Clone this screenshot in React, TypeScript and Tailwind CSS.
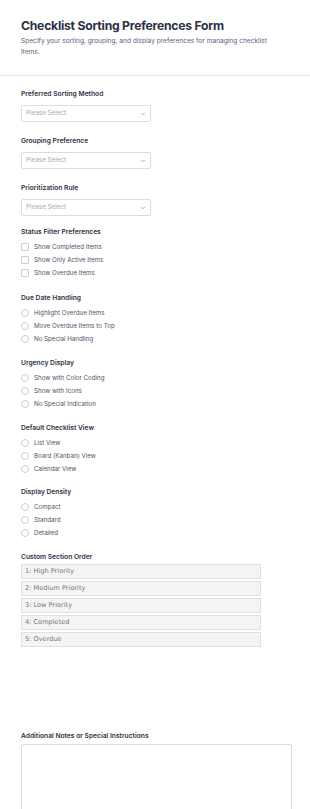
import { ChevronDown } from 'lucide-react';

const checkboxOptions = ['Show Completed Items', 'Show Only Active Items', 'Show Overdue Items'];

const radioGroups = [
  { label: 'Due Date Handling', options: ['Highlight Overdue Items', 'Move Overdue Items to Top', 'No Special Handling'] },
  { label: 'Urgency Display', options: ['Show with Color Coding', 'Show with Icons', 'No Special Indication'] },
  { label: 'Default Checklist View', options: ['List View', 'Board (Kanban) View', 'Calendar View'] },
  { label: 'Display Density', options: ['Compact', 'Standard', 'Detailed'] },
];

const sectionOrder = ['1: High Priority', '2: Medium Priority', '3: Low Priority', '4: Completed', '5: Overdue'];

function Label({ children }: { children: React.ReactNode }) {
  return <div className="h-[10px] text-[6.7px] leading-[10px] font-semibold text-[#2c3345]">{children}</div>;
}

function SelectField({ label }: { label: string }) {
  return (
    <div className="mb-[14px]">
      <Label>{label}</Label>
      <div className="mt-[6px] flex h-[17px] w-[130px] items-center justify-between rounded-[2px] border border-[#d8dde6] bg-white pl-[4px] pr-[4px]">
        <span className="text-[6.3px] text-[#a3abbb]">Please Select</span>
        <ChevronDown className="h-[6px] w-[6px] text-[#8894ab]" strokeWidth={3} />
      </div>
    </div>
  );
}

function OptionRow({ text, round }: { text: string; round?: boolean }) {
  return (
    <div className="flex h-[13px] items-center gap-[5px]">
      <span
        className={
          round
            ? 'h-[8px] w-[8px] rounded-full border border-[#c8ceda] bg-white'
            : 'h-[8px] w-[8px] rounded-[1px] border border-[#c8ceda] bg-white'
        }
      />
      <span className="text-[6.2px] text-[#4a5568]">{text}</span>
    </div>
  );
}

export default function App() {
  return (
    <div className="min-h-screen bg-white" style={{ fontFamily: 'Inter, "Noto Sans", sans-serif' }}>
      {/* Header */}
      <div className="px-[21px] pt-[16px] pb-[17px]">
        <h1 className="text-[12.2px] leading-[19px] font-bold tracking-[-0.02em] text-[#2c3345]">
          Checklist Sorting Preferences Form
        </h1>
        <p className="mt-[1px] max-w-[262px] text-[6.6px] leading-[11px] text-[#57647e]">
          Specify your sorting, grouping, and display preferences for managing checklist items.
        </p>
      </div>
      <div className="h-px bg-[#e6e8ec]" />

      <div className="px-[21px] pt-[13px]">
        <SelectField label="Preferred Sorting Method" />
        <SelectField label="Grouping Preference" />
        <SelectField label="Prioritization Rule" />

        <div className="mt-[-3px] mb-[14px]">
          <Label>Status Filter Preferences</Label>
          <div className="mt-[3px]">
            {checkboxOptions.map((o) => (
              <OptionRow key={o} text={o} />
            ))}
          </div>
        </div>

        {radioGroups.map((g, i) => (
          <div key={g.label} className={i === 2 ? 'mb-[12px]' : 'mb-[13px]'}>
            <Label>{g.label}</Label>
            <div className="mt-[3px]">
              {g.options.map((o) => (
                <OptionRow key={o} text={o} round />
              ))}
            </div>
          </div>
        ))}

        <div>
          <Label>Custom Section Order</Label>
          <div className="mt-[2px] flex w-[240px] flex-col gap-[2px]">
            {sectionOrder.map((s) => (
              <div
                key={s}
                className="flex h-[15px] items-center border border-[#e0e0e0] bg-[#f4f4f4] px-[3px] text-[6.6px] text-[#777]"
                style={{ fontFamily: '"DejaVu Sans", Verdana, sans-serif' }}
              >
                {s}
              </div>
            ))}
          </div>
        </div>

        <div className="mt-[84px]">
          <Label>Additional Notes or Special Instructions</Label>
          <div className="mt-[3px] h-[80px] w-[271px] rounded-[2px] border border-[#d8dde6] bg-white" />
        </div>
      </div>
    </div>
  );
}
